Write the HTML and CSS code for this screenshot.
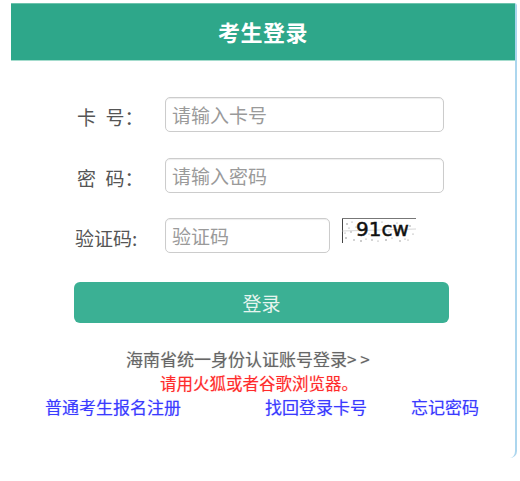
FILE: index.html
```html
<!DOCTYPE html>
<html lang="zh-CN">
<head>
<meta charset="utf-8">
<title>考生登录</title>
<link rel="stylesheet" href="styles.css">
</head>
<body>
<div class="card">
  <div class="header">考生登录</div>
  <form class="form">
    <div class="row">
      <label class="label spaced">卡&ensp;号：</label>
      <input class="field" type="text" placeholder="请输入卡号">
    </div>
    <div class="row">
      <label class="label spaced">密&ensp;码：</label>
      <input class="field" type="password" placeholder="请输入密码">
    </div>
    <div class="row">
      <label class="label">验证码:</label>
      <input class="field short" type="text" placeholder="验证码">
      <svg class="captcha" width="74" height="25" viewBox="0 0 74 25">
        <rect x="0" y="0" width="74" height="25" fill="#fff"/>
        <line x1="0.5" y1="0" x2="0.5" y2="25" stroke="#444" stroke-width="1"/>
        <line x1="0" y1="0.5" x2="74" y2="0.5" stroke="#777" stroke-width="1"/>
        <g fill="#888">
          <circle cx="5" cy="6" r="0.8"/><circle cx="9" cy="14" r="0.7"/><circle cx="4" cy="20" r="0.8"/>
          <circle cx="12" cy="22" r="0.7"/><circle cx="14" cy="9" r="0.6"/><circle cx="7" cy="10" r="0.6"/>
          <circle cx="19" cy="23" r="0.8"/><circle cx="24" cy="21" r="0.6"/><circle cx="30" cy="22" r="0.7"/>
          <circle cx="36" cy="23" r="0.6"/><circle cx="44" cy="22" r="0.8"/><circle cx="50" cy="20" r="0.6"/>
          <circle cx="58" cy="23" r="0.7"/><circle cx="63" cy="21" r="0.6"/><circle cx="68" cy="8" r="0.7"/>
          <circle cx="71" cy="16" r="0.6"/><circle cx="10" cy="4" r="0.6"/><circle cx="16" cy="17" r="0.7"/>
          <circle cx="40" cy="4" r="0.6"/><circle cx="55" cy="5" r="0.6"/><circle cx="47" cy="14" r="0.6"/>
          <circle cx="3" cy="15" r="0.6"/><circle cx="27" cy="16" r="0.6"/><circle cx="66" cy="22" r="0.6"/>
        </g>
        <line x1="0" y1="13" x2="74" y2="11" stroke="#bbb" stroke-width="0.6"/>
        <text x="14" y="18" class="captcha-text">91cw</text>
      </svg>
    </div>
    <button class="submit" type="button">登录</button>
  </form>
  <div class="footer">
    <a class="unified" href="#">海南省统一身份认证账号登录&gt; &gt;</a>
    <p class="warn">请用火狐或者谷歌浏览器。</p>
    <div class="links">
      <a class="link reg" href="#">普通考生报名注册</a>
      <a class="link find" href="#">找回登录卡号</a>
      <a class="link forget" href="#">忘记密码</a>
    </div>
  </div>
</div>
</body>
</html>
```
FILE: styles.css
```css
* { box-sizing: border-box; }
html, body {
  margin: 0;
  padding: 0;
  background: #fff;
  font-family: "Noto Sans CJK SC", "Noto Sans", "Liberation Sans", sans-serif;
}
.card {
  margin: 3px 0 0 11px;
  width: 506px;
  height: 455px;
  border-right: 2px solid #acd6ee;
  border-radius: 0 3px 7px 0;
  background: #fff;
}
.header {
  height: 58px;
  background: #2ea78a;
  border-top: 1px solid #6cc3ac;
  border-bottom: 1px solid #a4dccd;
  color: #fff;
  font-size: 22px;
  font-weight: bold;
  line-height: 55px;
  text-align: center;
  letter-spacing: 0.5px;
}
.form {
  margin: 0;
  padding: 36px 0 0 64px;
  display: flex;
  flex-direction: column;
  gap: 25.5px;
}
.row {
  display: flex;
  align-items: center;
  height: 35px;
}
.label {
  width: 90px;
  font-size: 19px;
  color: #555;
  padding-top: 5px;
  line-height: 24px;
}
.label.spaced { padding-left: 2px; }
.field {
  width: 279px;
  height: 35px;
  border: 1px solid #ccc;
  border-radius: 5px;
  box-shadow: inset 0 1px 1px rgba(0,0,0,0.07);
  padding: 0 6px;
  font-size: 19px;
  font-family: "Noto Sans CJK SC", "Noto Sans", sans-serif;
  color: #333;
  outline: none;
}
.field::placeholder { color: #9a9a9a; }
.field.short { width: 165px; }
.captcha {
  margin-left: 12px;
  align-self: flex-start;
  display: block;
}
.captcha-text {
  font-family: "DejaVu Sans", "Liberation Sans", sans-serif;
  font-size: 20px;
  fill: #111;
  stroke: #111;
  stroke-width: 0.5px;
}
.submit {
  margin: 3.5px 0 0 -1px;
  width: 375px;
  height: 41px;
  border: none;
  border-radius: 6px;
  background: #3bb094;
  color: #e6f5ef;
  font-size: 19px;
  font-family: "Noto Sans CJK SC", sans-serif;
  padding: 0;
  cursor: pointer;
}
.footer {
  padding-top: 24px;
  font-size: 17px;
  line-height: 24px;
}
.unified {
  display: block;
  margin-left: 115px;
  color: #666;
  text-decoration: none;
  text-shadow: 0 0 1px rgba(0,0,0,0.25);
}
.warn {
  margin: 0 0 0 149px;
  font-size: 16.5px;
  color: #ff2b2b;
  text-shadow: 0 0 1px rgba(255,0,0,0.3);
}
.links {
  display: flex;
  padding-left: 34px;
  font-size: 17px;
}
.link {
  color: #3a3aff;
  text-decoration: none;
  text-shadow: 0 0 1px rgba(0,0,255,0.3);
}
.find { margin-left: 84px; }
.forget { margin-left: 44px; }
```
